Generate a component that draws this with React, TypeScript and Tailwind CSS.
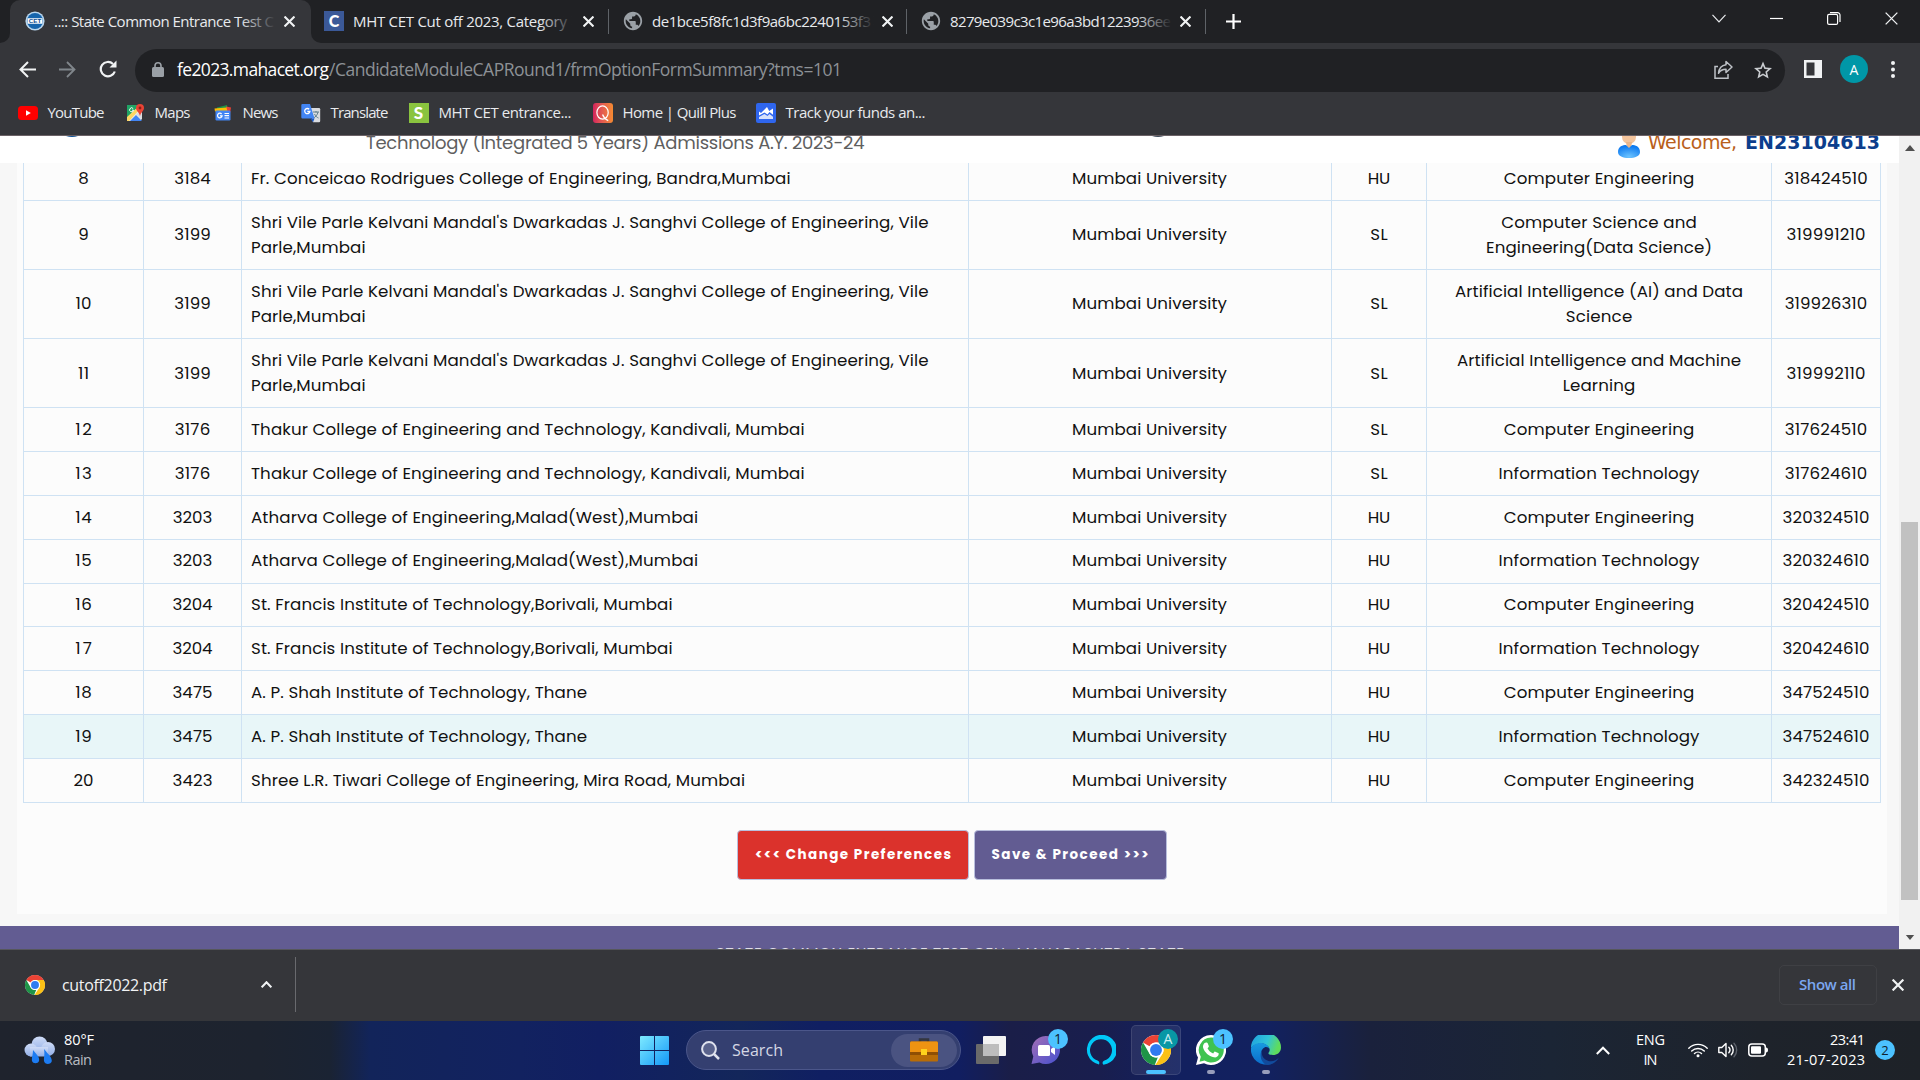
import { useLayoutEffect, useRef, useState, type ReactNode } from "react";

const UI = "font-['Open_Sans','Noto_Sans',sans-serif]";
const PAGE = "font-['Poppins','Inter',sans-serif]";

/* One line of text whose tracking is computed so that it spans `w` pixels. */
function Fit({ w, className = "", children }: { w: number; className?: string; children: string }) {
  const ref = useRef<HTMLSpanElement>(null);
  const [ls, setLs] = useState(0);
  useLayoutEffect(() => {
    if (!ref.current || children.length < 2) return;
    const natural = ref.current.getBoundingClientRect().width - ls * children.length;
    setLs((w - natural) / (children.length - 1));
  }, [w, children]);
  return (
    <span ref={ref} className={`inline-block shrink-0 whitespace-nowrap ${className}`} style={{ letterSpacing: `${ls}px`, marginRight: `${-ls}px` }}>
      {children}
    </span>
  );
}

/* ---------- icons ---------- */

function ChromeLogo({ className }: { className: string }) {
  return (
    <svg viewBox="0 0 48 48" className={className}>
      <circle cx="24" cy="24" r="24" fill="#fff" />
      <path d="M24 0a24 24 0 0 1 20.8 12H24a12 12 0 0 0-10.4 6L3.2 12A24 24 0 0 1 24 0z" fill="#ea4335" />
      <path d="M3.2 12l10.4 18A12 12 0 0 0 24 36c1 0 2-.1 3-.4L22 48A24 24 0 0 1 3.200 12z" fill="#1e9447" />
      <path d="M44.800 12A24 24 0 0 1 23 48l11.400-18A12 12 0 0 0 32 15l-4-3z" fill="#fbc116" />
      <circle cx="24" cy="24" r="12" fill="#fff" />
      <circle cx="24" cy="24" r="9.500" fill="#2f7bf0" />
    </svg>
  );
}

function Globe() {
  return (
    <svg viewBox="0 0 24 24" className="size-[22px]">
      <path fill="#9aa0a6" d="M12 2C6.480 2 2 6.480 2 12s4.480 10 10 10 10-4.480 10-10S17.520 2 12 2zm-1 17.930c-3.950-.49-7-3.850-7-7.930 0-.62.080-1.210.210-1.790L9 15v1c0 1.100.900 2 2 2v1.930zm6.900-2.540c-.26-.81-1-1.390-1.900-1.390h-1v-3c0-.55-.45-1-1-1H8v-2h2c.550 0 1-.45 1-1V7h2c1.100 0 2-.9 2-2v-.41c2.930 1.190 5 4.060 5 7.410 0 2.080-.8 3.970-2.100 5.390z" />
    </svg>
  );
}

function CetLogo() {
  return (
    <svg viewBox="0 0 20 20" className="size-5">
      <circle cx="10" cy="10" r="9.600" fill="#b9d7ef" />
      <circle cx="10" cy="10" r="8" fill="#1565ad" />
      <path d="M2.500 10h15" stroke="#fff" strokeWidth="5.500" />
      <text x="10" y="12.200" fontSize="6.200" fontWeight="bold" textAnchor="middle" fill="#0f4f94" fontFamily="Liberation Sans">CET</text>
    </svg>
  );
}

function Cross({ size, width = 2 }: { size: number; width?: number }) {
  return (
    <svg width={size} height={size} viewBox="0 0 10 10" fill="none" stroke="#f1f3f4" strokeWidth={(width * 10) / size}>
      <path d="M.5.5l9 9M9.500.5l-9 9" />
    </svg>
  );
}

/* ---------- browser chrome ---------- */

function Tab({ icon, title, w, fade, className }: { icon: ReactNode; title: string; w: number; fade: string; className: string }) {
  return (
    <div className={`flex h-[43px] shrink-0 items-center pb-px ${className}`}>
      <div className="flex w-[22px] shrink-0 justify-center">{icon}</div>
      <div className="relative ml-[8px] w-[222px] shrink-0 overflow-hidden pb-px text-[15px] leading-[22px] text-[#e8eaed]">
        <Fit w={w}>{title}</Fit>
        <div className={`absolute inset-y-0 right-0 w-9 bg-gradient-to-r from-transparent ${fade}`} />
      </div>
      <div className="ml-[8px] mt-px shrink-0">
        <Cross size={11} width={2.1} />
      </div>
    </div>
  );
}

function TabStrip() {
  return (
    <div className="flex h-[43px] items-center bg-[#202124]">
      <div className="flex h-full w-[10px] items-end bg-[#35363a]">
        <div className="h-full w-full rounded-br-[10px] bg-[#202124]" />
      </div>
      <div className="h-full w-[301px] rounded-t-[10px] bg-[#35363a]">
        <Tab icon={<CetLogo />} title="..:: State Common Entrance Test C" w={220} fade="to-[#35363a]" className="pl-[14px]" />
      </div>
      <div className="h-full w-[12px] bg-[#35363a]">
        <div className="h-full w-full rounded-bl-[10px] bg-[#202124]" />
      </div>
      <Tab
        icon={<div className="flex size-5 items-center justify-center bg-[#3b5998] font-['Lato'] text-[16px] font-black text-white">C</div>}
        title="MHT CET Cut off 2023, Category"
        w={214}
        fade="to-[#202124]"
        className="w-[285px]"
      />
      <div className="h-[25px] w-px bg-[#5f6368]" />
      <Tab icon={<Globe />} title="de1bce5f8fc1d3f9a6bc2240153f3" w={219} fade="to-[#202124]" className="w-[297px] pl-[13px]" />
      <div className="h-[25px] w-px bg-[#5f6368]" />
      <Tab icon={<Globe />} title="8279e039c3c1e96a3bd1223936ee" w={221} fade="to-[#202124]" className="w-[298px] pl-[13px]" />
      <div className="h-[25px] w-px bg-[#5f6368]" />
      <svg className="ml-[20px] size-[15px]" viewBox="0 0 15 15" stroke="#fff" strokeWidth="2.200">
        <path d="M7.500 0v15M0 7.500h15" />
      </svg>
      <div className="mr-[22px] ml-auto flex h-[36px] items-center gap-[44px] self-start">
        <svg width="14" height="9" viewBox="0 0 14 9" fill="none" stroke="#e8eaed" strokeWidth="1.200"><path d="M.5.8L7 7.800 13.500.8" /></svg>
        <svg width="13" height="13" viewBox="0 0 13 13" stroke="#fff" strokeWidth="1.200"><path d="M0 6.500h13" /></svg>
        <svg width="14" height="13" viewBox="0 0 14 13" fill="none" stroke="#fff" strokeWidth="1.200">
          <rect x=".6" y="2.400" width="10" height="10" rx="1.500" /><path d="M3 .6h7.500a2.500 2.500 0 0 1 2.500 2.500V10" />
        </svg>
        <Cross size={13} width={1.3} />
      </div>
    </div>
  );
}

function Toolbar() {
  return (
    <div className="flex h-[54px] items-center bg-[#35363a]">
      <div className="ml-[19px] flex w-[116px] items-center gap-[23px] pb-[2px]">
        <svg className="size-[17px]" viewBox="0 0 17 17" fill="none" stroke="#f1f3f4" strokeWidth="2"><path d="M17 8.500H2M9 1L1.500 8.500 9 16" /></svg>
        <svg className="size-[17px]" viewBox="0 0 17 17" fill="none" stroke="#80868b" strokeWidth="1.800"><path d="M0 8.500h15M8 1l7.500 7.500L8 16" /></svg>
        <svg className="size-[18px]" viewBox="0 0 18 18" fill="none" stroke="#f1f3f4" strokeWidth="2.200"><path d="M15.800 11.500A7.200 7.200 0 1 1 14 4" /><path d="M17.500.5v7h-7z" fill="#f1f3f4" stroke="none" /></svg>
      </div>
      <div className="flex h-[43px] w-[1650px] items-center rounded-full bg-[#202124] pb-px pl-[17px]">
        <svg width="12" height="15" viewBox="0 0 12 15"><rect y="5" width="12" height="10" rx="1.500" fill="#9aa0a6" /><path d="M3 6V3.800a3 3 0 0 1 6 0V6" fill="none" stroke="#9aa0a6" strokeWidth="1.600" /></svg>
        <div className="ml-[13px] pb-px text-[17.500px] leading-6 text-[#8d9196]">
          <Fit w={152} className="text-white">fe2023.mahacet.org</Fit>
          <Fit w={513}>/CandidateModuleCAPRound1/frmOptionFormSummary?tms=101</Fit>
        </div>
        <svg className="mr-[21px] ml-auto size-[19px]" viewBox="0 0 19 19" fill="none" stroke="#bdc1c6" strokeWidth="1.500">
          <path d="M4 6.500H1v11.700h13V14" /><path d="M12 1.500l6 5.500-6 5.500V9.300c-3.500 0-5.800 1.200-7.500 4C5 8.500 8 5.200 12 4.700z" strokeLinejoin="round" />
        </svg>
        <svg className="mr-[13px] size-[18px]" viewBox="0 0 24 24" fill="#c8cbcf">
          <path d="M24 9.240l-8.630-.74L12 .5 8.630 8.500 0 9.240l6.550 5.680L4.580 23.400 12 18.900l7.420 4.500-1.970-8.480zM12 16.600l-4.200 2.540 1.100-4.780-3.700-3.200 4.880-.42L12 6.200l1.920 4.540 4.880.42-3.700 3.200 1.100 4.780z" />
        </svg>
      </div>
      <div className="flex items-center pb-[2px]">
        <svg className="ml-[19px] h-[18px] w-[18px]" viewBox="0 0 18 18"><path fill="#f1f3f4" d="M0 0h18v18H0zM2.500 2.500v13h8v-13z" /></svg>
        <div className="ml-[18px] flex size-7 items-center justify-center rounded-full bg-[#0097a7] text-[14px] text-white">A</div>
        <svg className="ml-[23px] h-[17px] w-1" viewBox="0 0 4 17" fill="#f1f3f4"><circle cx="2" cy="2" r="2" /><circle cx="2" cy="8.500" r="2" /><circle cx="2" cy="15" r="2" /></svg>
      </div>
    </div>
  );
}

function Bookmark({ icon, label, w, className }: { icon: ReactNode; label: string; w: number; className: string }) {
  return (
    <div className={`flex shrink-0 items-center gap-[10px] ${className}`}>
      <div className="flex size-5 shrink-0 items-center justify-center">{icon}</div>
      <Fit w={w} className="pb-[2px] text-[15px] leading-[22px] text-[#e8eaed]">{label}</Fit>
    </div>
  );
}

function Bookmarks() {
  return (
    <div className="flex h-[38px] items-center bg-[#35363a] pb-[6px] pl-[17.500px]">
      <Bookmark className="w-[107px]" w={57} label="YouTube" icon={
        <svg viewBox="0 0 20 14" className="w-5"><rect width="20" height="14" rx="3.500" fill="#f00" /><path d="M8 4.200v5.600L12.800 7z" fill="#fff" /></svg>} />
      <Bookmark className="w-[88px]" w={36} label="Maps" icon={
        <svg viewBox="0 0 20 20" className="size-5">
          <path d="M2 2h14v16H2z" fill="#e8eaed" /><path d="M2 2h13L2 15z" fill="#20a465" /><path d="M2 14L14 3l2 2L4 18H2z" fill="#fdd663" /><path d="M5 18l6-6 6 6z" fill="#4285f4" /><path d="M11 11l6 6V9z" fill="#dadce0" />
          <path d="M15 1a4 4 0 0 0-4 4c0 3 3.200 4 4 8 .8-4 4-5 4-8a4 4 0 0 0-4-4z" fill="#ea4335" /><circle cx="15" cy="5" r="1.400" fill="#8c1f16" />
          <path d="M8.200 5.600a2 2 0 1 0 .4 1.600H7" stroke="#fff" strokeWidth="1" fill="none" />
        </svg>} />
      <Bookmark className="w-[88px]" w={36} label="News" icon={
        <svg viewBox="0 0 20 20" className="size-5">
          <path d="M4 4.500l10-2.500 1 5H4z" fill="#1e9447" /><path d="M13 3.500l5 1-.8 5H13z" fill="#ea4335" /><path d="M1.500 5.500l12-1 1 4H2z" fill="#fbbc04" />
          <rect x="2.500" y="7.500" width="15" height="10" rx="1.200" fill="#4285f4" /><path d="M8.600 11a2.300 2.300 0 1 0 .5 1.900H7M11.500 10.500H16M11.500 12.700H16M11.500 15H16" stroke="#fff" strokeWidth="1.200" fill="none" />
        </svg>} />
      <Bookmark className="w-[108px]" w={58} label="Translate" icon={
        <svg viewBox="0 0 20 20" className="size-5">
          <path d="M8 5h10a1.200 1.200 0 0 1 1.200 1.200V18a1.200 1.200 0 0 1-1.200 1.200h-6z" fill="#dadce0" /><path d="M12 9h6M15 8v1.500M17 9c-.5 3-2.500 5-4.500 6M13.500 11c1 2 2.500 3.500 4 4" stroke="#5f7f8c" fill="none" />
          <path d="M1.500 1H9l4.500 14.500H1.500A1.200 1.200 0 0 1 .3 14.300V2.200A1.200 1.200 0 0 1 1.500 1z" fill="#4285f4" /><path d="M12 19.200l-2.500-3.700h4z" fill="#1a57c2" />
          <path d="M8.200 6.300a2.600 2.600 0 1 0 .7 2.200H6.300" stroke="#fff" strokeWidth="1.300" fill="none" />
        </svg>} />
      <Bookmark className="w-[184px]" w={133} label="MHT CET entrance..." icon={
        <div className="flex size-5 items-center justify-center bg-[#8ac43f] font-['Lato'] text-[17px] font-black text-white">S</div>} />
      <Bookmark className="w-[163px]" w={114} label="Home | Quill Plus" icon={
        <div className="flex size-5 items-center justify-center rounded-[3px] bg-gradient-to-r from-[#d3215c] to-[#f48a2f]">
          <svg viewBox="0 0 16 18" className="h-[17px]" fill="none" stroke="#fff"><ellipse cx="8" cy="8" rx="6" ry="7" strokeWidth="1.300" /><path d="M8 10c1 3 3 5 6 6.500" strokeWidth="1.300" /></svg>
        </div>} />
      <Bookmark className="" w={140} label="Track your funds an..." icon={
        <div className="flex size-5 items-center justify-center rounded-[2px] bg-[#2f66ee]">
          <svg viewBox="0 0 14 14" className="size-[14px]" fill="#fff"><path d="M0 5.500l2 1.500L8 1l2.200 4L14 2.500v6.300L10.500 6 8.500 8.500 5.500 6.500 0 9.500z" /><path d="M0 11l5.500-3 3 2L10.500 8l3.500 2.800V13H0z" opacity=".8" /></svg>
        </div>} />
    </div>
  );
}

/* ---------- page ---------- */

const WIDTHS: Record<string, number> = {
  "Fr. Conceicao Rodrigues College of Engineering, Bandra,Mumbai": 539.5,
  "Shri Vile Parle Kelvani Mandal's Dwarkadas J. Sanghvi College of Engineering, Vile": 677.5,
  "Parle,Mumbai": 114.5,
  "Thakur College of Engineering and Technology, Kandivali, Mumbai": 553.5,
  "Atharva College of Engineering,Malad(West),Mumbai": 447,
  "St. Francis Institute of Technology,Borivali, Mumbai": 421.5,
  "A. P. Shah Institute of Technology, Thane": 336,
  "Shree L.R. Tiwari College of Engineering, Mira Road, Mumbai": 494,
  "Mumbai University": 155,
  HU: 22.5,
  SL: 17.5,
  "Computer Engineering": 190.5,
  "Computer Science and": 195.5,
  "Engineering(Data Science)": 226,
  "Artificial Intelligence (AI) and Data": 288,
  Science: 66.5,
  "Artificial Intelligence and Machine": 284,
  Learning: 72.5,
  "Information Technology": 201,
  "318424510": 83.5,
  "319991210": 79,
  "319926310": 82.5,
  "319992110": 79,
  "317624510": 82.5,
  "317624610": 82.5,
  "3184": 36.5,
  "3199": 36.5,
  "3176": 35.5,
  "3203": 39.5,
  "3204": 40,
  "3475": 40,
  "3423": 40,
  "10": 16,
  "11": 11,
  "20": 20,
};

function Lines({ lines }: { lines: string[] }) {
  return (
    <>
      {lines.map((t) => (
        <div key={t} className="leading-[25px]">
          <Fit w={WIDTHS[t] ?? (t.length === 9 ? 87 : t.length === 2 ? 16.5 : 10)}>{t}</Fit>
        </div>
      ))}
    </>
  );
}

type Row = { no: string; code: string; name: string[]; seat: string; course: string[]; choice: string; h: string; hot?: boolean; raised?: boolean };

const SANGHVI = ["Shri Vile Parle Kelvani Mandal's Dwarkadas J. Sanghvi College of Engineering, Vile", "Parle,Mumbai"];
const THAKUR = ["Thakur College of Engineering and Technology, Kandivali, Mumbai"];
const ATHARVA = ["Atharva College of Engineering,Malad(West),Mumbai"];
const FRANCIS = ["St. Francis Institute of Technology,Borivali, Mumbai"];
const SHAH = ["A. P. Shah Institute of Technology, Thane"];
const CE = ["Computer Engineering"];
const IT = ["Information Technology"];

const ROWS: Row[] = [
  { no: "8", code: "3184", name: ["Fr. Conceicao Rodrigues College of Engineering, Bandra,Mumbai"], seat: "HU", course: CE, choice: "318424510", h: "h-[44px]" },
  { no: "9", code: "3199", name: SANGHVI, seat: "SL", course: ["Computer Science and", "Engineering(Data Science)"], choice: "319991210", h: "h-[69px]", raised: true },
  { no: "10", code: "3199", name: SANGHVI, seat: "SL", course: ["Artificial Intelligence (AI) and Data", "Science"], choice: "319926310", h: "h-[69px]", raised: true },
  { no: "11", code: "3199", name: SANGHVI, seat: "SL", course: ["Artificial Intelligence and Machine", "Learning"], choice: "319992110", h: "h-[69px]" },
  { no: "12", code: "3176", name: THAKUR, seat: "SL", course: CE, choice: "317624510", h: "h-[44px]" },
  { no: "13", code: "3176", name: THAKUR, seat: "SL", course: IT, choice: "317624610", h: "h-[44px]" },
  { no: "14", code: "3203", name: ATHARVA, seat: "HU", course: CE, choice: "320324510", h: "h-[44px]" },
  { no: "15", code: "3203", name: ATHARVA, seat: "HU", course: IT, choice: "320324610", h: "h-[44px]", raised: true },
  { no: "16", code: "3204", name: FRANCIS, seat: "HU", course: CE, choice: "320424510", h: "h-[43px]", raised: true },
  { no: "17", code: "3204", name: FRANCIS, seat: "HU", course: IT, choice: "320424610", h: "h-[44px]" },
  { no: "18", code: "3475", name: SHAH, seat: "HU", course: CE, choice: "347524510", h: "h-[44px]" },
  { no: "19", code: "3475", name: SHAH, seat: "HU", course: IT, choice: "347524610", h: "h-[44px]", hot: true },
  { no: "20", code: "3423", name: ["Shree L.R. Tiwari College of Engineering, Mira Road, Mumbai"], seat: "HU", course: CE, choice: "342324510", h: "h-[44px]" },
];

function Cell({ lines, raised, className = "items-center" }: { lines: string[]; raised?: boolean; className?: string }) {
  return (
    <div className={`flex flex-col justify-center border-r border-[#cfe2f3] ${raised && lines.length === 1 ? "pb-[2px]" : ""} ${className}`}>
      <Lines lines={lines} />
    </div>
  );
}

function OptionTable() {
  return (
    <div className="-mt-[6px] ml-[6px] w-[1858px] border-l border-[#cfe2f3] text-[16.667px] text-[#111]">
      {ROWS.map((r) => (
        <div key={r.no} className={`grid grid-cols-[120px_98px_727px_363px_95px_345px_109px] border-b border-[#cfe2f3] ${r.h} ${r.hot ? "bg-[#e8f6f8]" : ""}`}>
          <Cell lines={[r.no]} raised={r.raised} />
          <Cell lines={[r.code]} raised={r.raised} />
          <Cell lines={r.name} raised={r.raised} className="pl-[9px]" />
          <Cell lines={["Mumbai University"]} raised={r.raised} className="items-center pr-px" />
          <Cell lines={[r.seat]} raised={r.raised} />
          <Cell lines={r.course} raised={r.raised} />
          <Cell lines={[r.choice]} raised={r.raised} />
        </div>
      ))}
    </div>
  );
}

function PageHeader() {
  return (
    <div className="relative z-10 flex h-[27px] shrink-0 items-start overflow-hidden bg-white">
      <div className="-mt-[39px] ml-[54px] h-[40px] w-[36px] shrink-0 rounded-full bg-[#0b4f94]" />
      <Fit w={498.5} className="-mt-[6px] ml-[276px] text-[18px] leading-[26px] text-[#5f5f5f]">Technology (Integrated 5 Years) Admissions A.Y. 2023-24</Fit>
      <div className="-mt-[39px] ml-[275px] h-[40px] w-[36px] shrink-0 rounded-full bg-[#3c4858]" />
      <svg className="-mt-[7px] mr-[7px] ml-auto h-[30px] w-6 shrink-0" viewBox="0 0 24 30">
        <defs><radialGradient id="body" cx=".5" cy=".9" r=".8"><stop offset="0" stopColor="#6cc4ff" /><stop offset="1" stopColor="#0f7bf0" /></radialGradient></defs>
        <circle cx="12" cy="8" r="7" fill="#f3c49c" /><path d="M9 13h6l-1 6h-4z" fill="#e9b58a" />
        <path d="M1 23c0-6 5-7 8-7l3 3 3-3c3 0 8 1 8 7 0 4-5 6-11 6S1 27 1 23z" fill="url(#body)" />
      </svg>
      <div className="-mt-[8px] mr-[19px] flex font-['DejaVu_Sans'] text-[19px] leading-[28px]">
        <Fit w={89} className="text-[#b9601a]">Welcome,</Fit>
        <Fit w={135} className="ml-[8px] font-bold text-[#0c3e8c]">EN23104613</Fit>
      </div>
    </div>
  );
}

function Page() {
  return (
    <div className={`flex h-[813px] ${PAGE}`}>
      <div className="flex w-[1899px] flex-col overflow-hidden bg-[#f7f7f7]">
        <PageHeader />
        <div className="ml-[17px] h-[751px] w-[1870px] shrink-0 bg-[#fcfcfc]">
          <OptionTable />
          <div className="mt-[27px] ml-[720px] flex gap-[5px] text-[13.500px] font-bold text-white">
            <button className="flex h-[50px] w-[232px] items-center justify-center rounded-[4px] border border-[#b9bfdd] bg-[#db322c]">
              <Fit w={196}>{"<<< Change Preferences"}</Fit>
            </button>
            <button className="flex h-[50px] w-[193px] items-center justify-center rounded-[4px] border border-[#b9bfdd] bg-[#625c92] pr-px">
              <Fit w={157}>{"Save & Proceed >>>"}</Fit>
            </button>
          </div>
        </div>
        <div className="mt-[12px] h-[23px] shrink-0 overflow-hidden bg-[#625c92] pl-[716px] text-[15px] leading-[22px] text-white/80">
          <Fit w={468} className="mt-[16px]">STATE COMMON ENTRANCE TEST CELL, MAHARASHTRA STATE</Fit>
        </div>
      </div>
      <div className="flex w-[21px] flex-col items-center bg-[#f1f1f1]">
        <svg className="mt-[9px] h-[6px] w-[10px]" viewBox="0 0 10 6"><path d="M0 6l5-6 5 6z" fill="#505050" /></svg>
        <div className="mt-[371px] h-[378px] w-[17px] bg-[#c1c1c1]" />
        <svg className="mt-[35px] h-[5px] w-[10px]" viewBox="0 0 10 6"><path d="M0 0l5 6 5-6z" fill="#505050" /></svg>
      </div>
    </div>
  );
}

/* ---------- download shelf and taskbar ---------- */

function DownloadShelf() {
  return (
    <div className="flex h-[72px] items-center border-t border-[#56575b] bg-[#35363a] pb-[2px] text-[16px]">
      <ChromeLogo className="ml-[25px] size-5 shrink-0" />
      <Fit w={105} className="ml-[17px] text-[#f1f3f4]">cutoff2022.pdf</Fit>
      <svg className="ml-[94px] h-[7px] w-[11px]" viewBox="0 0 11 7" fill="none" stroke="#f1f3f4" strokeWidth="2"><path d="M.7 6.300L5.500 1.200l4.800 5.100" /></svg>
      <div className="ml-[23px] h-[55px] w-px bg-[#696a6e]" />
      <div className="mr-[15px] ml-auto flex h-10 w-[98px] items-center justify-center rounded-[5px] border border-[#3f4044] pr-px pb-px text-[15px] font-semibold text-[#7ba7f0]">
        <Fit w={57}>Show all</Fit>
      </div>
      <div className="mr-[16px]"><Cross size={12} width={2.2} /></div>
    </div>
  );
}

function Badge({ children, className = "bg-[#4cc2ff] text-[#10222e]" }: { children: string; className?: string }) {
  return <div className={`absolute -top-[6px] -right-[7px] flex size-5 items-center justify-center rounded-full text-[14px] leading-none ${className}`}>{children}</div>;
}

function TaskIcon({ children, mark, tile = "" }: { children: ReactNode; mark?: string; tile?: string }) {
  return (
    <div className={`flex h-[50px] w-[50px] shrink-0 flex-col items-center rounded-[5px] border border-transparent pt-[9px] ${tile}`}>
      <div className="relative size-[30px]">{children}</div>
      {mark && <div className={`mt-[5px] h-1 rounded-full ${mark}`} />}
    </div>
  );
}

function Taskbar() {
  return (
    <div className="flex h-[59px] items-center bg-[linear-gradient(90deg,#1f232d_0px,#1d232f_260px,#1a2333_330px,#12245a_370px,#122260_520px,#111f62_600px,#13265a_740px,#101f62_820px,#111e60_960px,#1a1e48_1010px,#191e4e_1100px,#12205f_1180px,#12215f_1270px,#1a213c_1370px,#1b2535_1550px,#1e232b_1760px,#1e2228_1920px)] pb-px">
      <svg className="ml-[24px] h-[28px] w-[31px] shrink-0" viewBox="0 0 31 28">
        <defs><linearGradient id="cloud" x1="0" y1="0" x2="0" y2="1"><stop offset="0" stopColor="#cfdcf7" /><stop offset="1" stopColor="#92aee6" /></linearGradient></defs>
        <g fill="url(#cloud)"><circle cx="15.500" cy="8.500" r="8" /><circle cx="7" cy="14" r="6.500" /><circle cx="24" cy="13" r="7" /><rect x="6" y="11" width="18" height="9.500" /></g>
        <path d="M9 14c3 4 7 7 6 11-1 3-6 3-7 0-.6-3 1-6 1-11zM20 13c4 5 9 9 7.500 13-1.500 3-7 2.500-7.500-1-.4-4 1-6 0-12z" fill="#1d7cf2" />
      </svg>
      <div className="ml-[9px] w-[576px] pb-px text-[14.500px] leading-[20px]">
        <div className="text-white"><Fit w={30}>80°F</Fit></div>
        <div className="text-[#b9bcc2]"><Fit w={28}>Rain</Fit></div>
      </div>
      <svg className="size-[29px] shrink-0" viewBox="0 0 29 29">
        <defs><linearGradient id="win" x1="0" y1="0" x2="1" y2="1"><stop offset="0" stopColor="#7eeaff" /><stop offset="1" stopColor="#1398f8" /></linearGradient></defs>
        <path fill="url(#win)" d="M0 1a1 1 0 0 1 1-1h13v14H0zM15 0h13a1 1 0 0 1 1 1v13H15zM0 15h14v14H1a1 1 0 0 1-1-1zM15 15h14v13a1 1 0 0 1-1 1H15z" />
      </svg>
      <div className="ml-[17px] flex h-10 w-[275px] shrink-0 items-center rounded-full border border-[#4b568a] bg-[#343f70] pr-[3px] pl-[14px]">
        <svg className="size-[19px]" viewBox="0 0 19 19" fill="none" stroke="#dfe2ee" strokeWidth="2"><circle cx="8" cy="8" r="6.900" fill="#59628c" /><path d="M13 13l5 5" strokeWidth="2.500" /></svg>
        <Fit w={51} className="ml-[12px] text-[16px] text-[#d4d7e4]">Search</Fit>
        <div className="ml-auto flex h-[33px] w-[66px] items-center justify-center rounded-full bg-[#4a5381]">
          <svg className="h-[24px] w-[28px]" viewBox="0 0 28 24">
            <path d="M10 4V1.500h8V4" fill="none" stroke="#33363f" strokeWidth="2.500" />
            <rect y="3.500" width="28" height="20" rx="1" fill="#b86c07" /><path d="M1 3.500h26l1 1V14H0V4.500z" fill="#ee9312" /><path d="M0 14h28v3H0z" fill="#8f4f04" /><rect x="11" y="11" width="6" height="6" fill="#ffd21c" />
          </svg>
        </div>
      </div>
      <svg className="ml-[15px] h-[28px] w-[30px] shrink-0" viewBox="0 0 30 28">
        <rect x="7" y="0" width="23" height="20" rx="1" fill="#f3f3f3" /><rect y="8" width="23" height="20" rx="1" fill="#6a6a6a" /><rect x="7" y="8" width="16" height="12" fill="#bdbdbd" />
      </svg>
      <div className="ml-[15px] flex gap-[5px]">
        <TaskIcon>
          <svg viewBox="0 0 30 30" className="size-[30px]">
            <defs><linearGradient id="chat" x1="0" y1="0" x2="1" y2="1"><stop offset="0" stopColor="#a56fb5" /><stop offset="1" stopColor="#4650d0" /></linearGradient></defs>
            <path d="M15 1a14 14 0 1 1-6.500 26.400L.5 29l1.800-7.500A14 14 0 0 1 15 1z" fill="url(#chat)" /><rect x="7" y="10" width="12" height="11" rx="1.500" fill="#fff" /><path d="M20 14l4-3v9l-4-3z" fill="#fff" />
          </svg>
          <Badge>1</Badge>
        </TaskIcon>
        <TaskIcon>
          <svg viewBox="0 0 30 30" className="size-[30px]"><path d="M13 29.500A15 15 0 1 1 17.500 29.700C16 28.500 16.300 26.500 18.500 25.600A11 11 0 1 0 11.500 25.600c1.800.8 2.200 2 1.500 3.900z" fill="#00c8f8" /></svg>
        </TaskIcon>
        <TaskIcon tile="border-white/10! bg-white/8" mark="w-5 bg-[#4cc2ff]">
          <ChromeLogo className="size-[30px]" />
          <Badge className="bg-[#0897a5] text-[#c9eef2]">A</Badge>
        </TaskIcon>
        <TaskIcon mark="w-2 bg-[#989dbb]">
          <svg viewBox="0 0 30 30" className="size-[30px]">
            <path d="M15 0a15 15 0 1 1-7 28.200L0 30l2-7.500A15 15 0 0 1 15 0z" fill="#fff" /><path d="M15 2.500A12.500 12.500 0 1 1 8.500 25.500L3.500 26.700l1.300-4.900A12.500 12.500 0 0 1 15 2.500z" fill="#3fc351" />
            <path d="M10.200 7.500c.6-.1 1.200 0 1.500.7l1.100 2.700c.2.500 0 .9-1.300 2.300 1.400 2.700 3 4 5.700 5.200 1.200-1.700 1.500-2 2.100-1.700l2.900 1.400c.6.300.6.600.5 1.200-.5 2.500-2.800 3.400-4.700 3-5.500-1.200-9.200-4.800-10.800-9.300-.6-2.300.5-5.300 3-5.500z" fill="#fff" />
          </svg>
          <Badge>1</Badge>
        </TaskIcon>
        <TaskIcon mark="w-2 bg-[#989dbb]">
          <svg viewBox="0 0 30 30" className="size-[30px]">
            <defs>
              <linearGradient id="e1" x1="0" y1="0" x2="1" y2=".3"><stop offset="0" stopColor="#1e9de0" /><stop offset=".6" stopColor="#30c4d8" /><stop offset="1" stopColor="#5fdc5c" /></linearGradient>
              <linearGradient id="e2" x1="0" y1="0" x2="0" y2="1"><stop offset="0" stopColor="#189ae0" /><stop offset="1" stopColor="#0b6ccb" /></linearGradient>
            </defs>
            <path d="M0 13A15 15 0 0 1 30 12.500c0 5-4 7.500-8 7.500-3 0-5-1-4.500-2.200.8-1 1.500-2 1-4C17.500 10.500 14 8.500 10 8.500 5 8.500 1.500 11 0 13z" fill="url(#e1)" />
            <path d="M0 13c1.500-2.800 5-5 9.500-5 4 0 8 2 9 6-1-1.500-3-2.500-5-1.500-3 1.500-4 5-3 8.500 1.500 5 5 7.500 10 7.500A15 15 0 0 1 0 13z" fill="url(#e2)" />
            <path d="M11 15c-1 4 .5 9.500 6.500 11 4.500 1 8-1 10.500-3.500-3 5-7 7.200-11.500 7.500C10 28.500 8 20 11 15z" fill="#124b9c" />
          </svg>
        </TaskIcon>
      </div>
      <div className="mr-[25px] ml-auto flex items-center">
        <svg className="h-[9px] w-[14px]" viewBox="0 0 14 9" fill="none" stroke="#fff" strokeWidth="2"><path d="M.8 8L7 1.700 13.200 8" /></svg>
        <div className="ml-[26px] flex w-[29px] flex-col items-center pb-px text-[14.500px] leading-[20px] text-white">
          <Fit w={29}>ENG</Fit>
          <Fit w={14}>IN</Fit>
        </div>
        <svg className="ml-[23px] h-[15px] w-5" viewBox="0 0 20 15" fill="none" stroke="#fff" strokeWidth="1.400" strokeLinecap="round">
          <path d="M.8 5.200a13 13 0 0 1 18.400 0M3.700 8a9 9 0 0 1 12.600 0M6.500 10.600a5 5 0 0 1 7 0" /><circle cx="10" cy="12.800" r="1.500" fill="#fff" stroke="none" />
        </svg>
        <svg className="ml-[10px] h-[16px] w-[20px]" viewBox="0 0 20 16" fill="none" stroke="#fff" strokeWidth="1.400" strokeLinecap="round" strokeLinejoin="round">
          <path d="M.8 5.500h3L8 1.500v13l-4.200-4h-3zM10.800 5.300a4 4 0 0 1 0 5.400M13.300 3.200a7 7 0 0 1 0 9.600" /><path d="M16 1.200a10 10 0 0 1 0 13.600" stroke="#5d626b" />
        </svg>
        <svg className="ml-[10px] h-[14px] w-5" viewBox="0 0 20 14"><rect x=".8" y="1" width="16.500" height="12" rx="3" fill="none" stroke="#fff" strokeWidth="1.500" /><rect x="3" y="3.200" width="10" height="7.600" rx="1" fill="#fff" /><path d="M18 4.500c1.500.3 2 1 2 2.500s-.5 2.200-2 2.500z" fill="#fff" /></svg>
        <div className="ml-[19px] flex w-[78px] flex-col items-end pb-px text-[14.500px] leading-[20px] text-white">
          <Fit w={35}>23:41</Fit>
          <Fit w={78}>21-07-2023</Fit>
        </div>
        <div className="ml-[10px] flex size-5 items-center justify-center rounded-full bg-[#4cc2ff] text-[13px] leading-none text-[#10222e]">2</div>
      </div>
    </div>
  );
}

export default function App() {
  return (
    <div className={`flex h-[1080px] w-[1920px] flex-col overflow-hidden ${UI}`}>
      <TabStrip />
      <Toolbar />
      <Bookmarks />
      <div className="h-px bg-[#6b6266]" />
      <Page />
      <DownloadShelf />
      <Taskbar />
    </div>
  );
}
